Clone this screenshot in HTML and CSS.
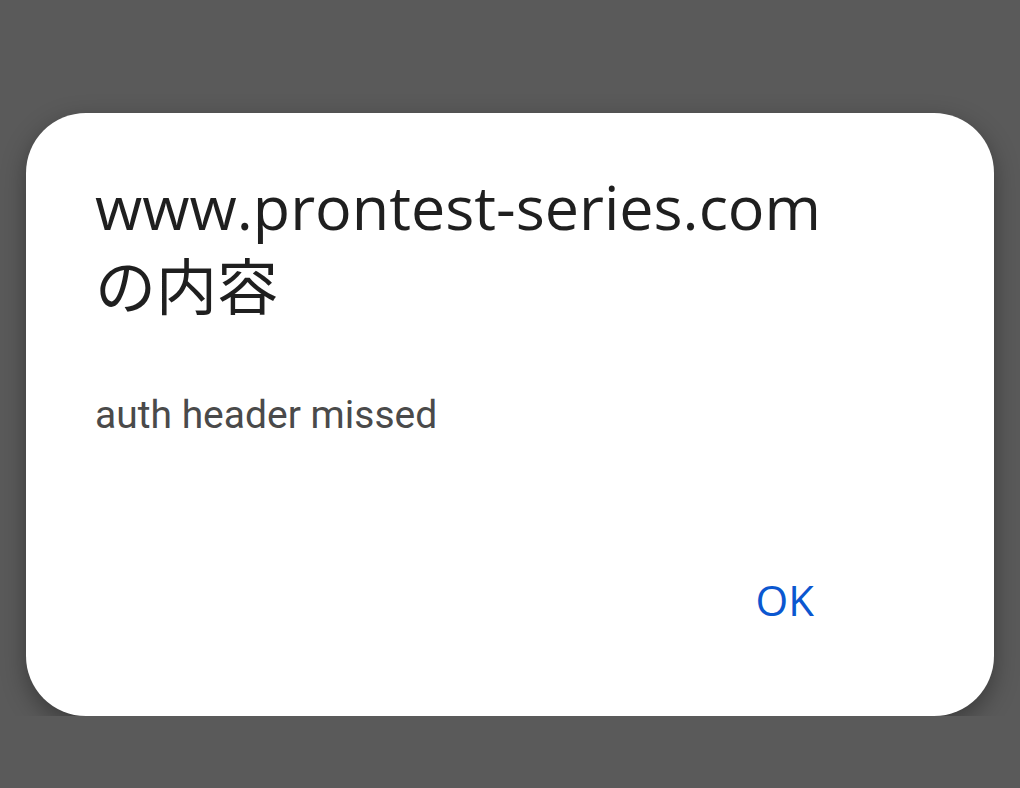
FILE: index.html
```html
<!DOCTYPE html>
<html lang="ja">
<head>
    <meta charset="utf-8">
    <link rel="stylesheet" href="styles.css">
</head>
<body>
<div class="dialog">
    <h1 class="title">www.prontest-series.com<br>の内容</h1>
    <p class="message">auth header missed</p>
    <div class="actions">
        <button class="ok">OK</button>
    </div>
</div>
</body>
</html>
```

FILE: styles.css
```css
html { background: #5a5a5a; }
body {
    margin: 0;
    padding: 113px 26px 0 26px;
    font-family: Roboto, "Noto Sans CJK JP", sans-serif;
}
.dialog {
    background: #fff;
    border-radius: 60px;
    height: 603px;
    box-sizing: border-box;
    padding: 54px 70px 0 69px;
    box-shadow: 0 8px 24px rgba(0,0,0,0.35);
    display: flex;
    flex-direction: column;
}
.title {
    margin: 0;
    font-family: "Open Sans", "Noto Sans CJK JP", sans-serif;
    font-weight: 400;
    font-size: 61px;
    line-height: 80px;
    color: #1f1f1f;
}
.message {
    margin: 64px 0 0 0;
    font-size: 39px;
    line-height: 48px;
    color: #4a4a4a;
}
.actions {
    display: flex;
    justify-content: flex-end;
    margin-top: 133px;
}
.ok {
    border: 0;
    background: none;
    padding: 0 110px 0 0;
    font-family: "Open Sans", sans-serif;
    font-size: 42px;
    line-height: 56px;
    font-weight: 500;
    color: #0b57d0;
}
```
